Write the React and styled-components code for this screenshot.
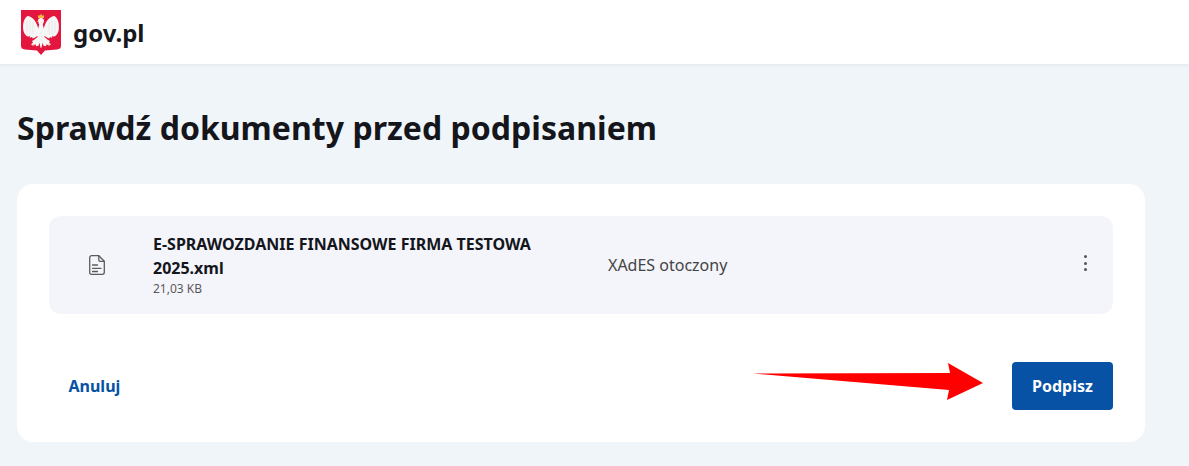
import React from "react";
import styled, { createGlobalStyle } from "styled-components";

const Global = createGlobalStyle`
  html, body { margin: 0; padding: 0; background: #f0f5fa; }
  body { font-family: "Noto Sans", "Open Sans", sans-serif; color: #1b1b1b; }
`;
const Page = styled.div`
  width: 1189px; height: 466px; overflow: hidden; position: relative;
`;
const Header = styled.header`
  height: 64px; background: #fff; display: flex; align-items: center;
  padding-left: 21px; gap: 12px; box-shadow: 0 1px 3px rgba(30,50,80,.08);
`;
const Brand = styled.span`
  font-size: 24px; font-weight: 700; color: #16181d;
  line-height: 32px; position: relative; top: 1px;
`;
const Main = styled.main`
  padding: 40px 44px 0 17px;
`;
const Title = styled.h1`
  margin: 0 0 32px; font-size: 32px; line-height: 48px; font-weight: 700; color: #14161b;
  letter-spacing: .03px;
`;
const Card = styled.section`
  background: #fff; border-radius: 16px; padding: 32px; height: 258px; box-sizing: border-box;
  display: flex; flex-direction: column; gap: 48px;
`;
const Row = styled.div`
  height: 98px; background: #f4f5fb; border-radius: 12px; display: grid;
  grid-template-columns: 96px 463px 1fr 56px; align-items: center;
`;
const IconCell = styled.div`
  display: flex; justify-content: center; color: #5c5c5c;
`;
const FileInfo = styled.div`
  padding: 0 64px 0 8px; margin-bottom: 1px;
`;
const FileName = styled.div`
  font-size: 16px; font-weight: 700; line-height: 24px; color: #14161b;
`;
const FileSize = styled.div`
  font-size: 12px; line-height: 16px; color: #5a5a5a; margin-top: 1px;
`;
const Format = styled.div`
  font-size: 16px; line-height: 24px; color: #444;
`;
const Dots = styled.div`
  display: flex; flex-direction: column; gap: 3.5px; align-items: center; margin-bottom: 4px;
`;
const Dot = styled.i`
  width: 3px; height: 3px; border-radius: 50%; background: #555; display: block;
`;
const Actions = styled.div`
  display: flex; justify-content: space-between; align-items: center;
`;
const Cancel = styled.button`
  border: 0; background: none; padding: 0 19.500px; height: 48px; font: 700 16px/24px "Noto Sans", sans-serif;
  color: #0752a5; cursor: pointer;
`;
const Primary = styled.button`
  border: 0; background: #0752a5; color: #fff; border-radius: 4px; width: 101px; height: 48px;
  font: 700 16px/24px "Noto Sans", sans-serif; cursor: pointer; padding: 0;
`;
const Arrow = styled.svg`
  position: absolute; left: 750px; top: 360px;
`;

const Crest = () => (
  <svg width="40" height="45" viewBox="0 0 40 45">
    <path d="M0 0H40V36Q40 39 36 39.500L24 40.500L20 45L16 40.500L4 39.500Q0 39 0 36Z" fill="#e2163e"/>
    <g fill="#f6f6f6">
      <path d="M20 8c-2.200 0-3.200 1.500-3 3.200.1 1.300 1 2 1.200 3.300L17 19l-1 7 4 4 4-4-1-7-1.200-4.500c.2-1.300 1.100-2 1.200-3.300.2-1.700-.8-3.200-3-3.200z"/>
      <path d="M16.500 16C15 11 11 6.500 6.500 6 3 8 1.500 14 2.200 19.500c.4 3.500 2.300 6.200 5 7.200l1.300-1 .5 2 2-.6.700 1.500c2-.6 3.800-1.800 5.300-3.600.5-3 .6-6 -.5-9z"/>
      <path d="M23.500 16C25 11 29 6.500 33.500 6c3.500 2 5 8 4.300 13.500-.4 3.500-2.300 6.200-5 7.200l-1.300-1-.5 2-2-.6-.7 1.500c-2-.6-3.800-1.800-5.300-3.600-.5-3-.6-6 .5-9z"/>
      <path d="M16.500 27c-1.500 1.500-3.500 3-5.500 4l1 1.800-2 1.500 2 1.500 2.500-1.500.5 2 2.500-.5 1-3 1 5 1 0 1-5 1 3 2.500.5.500-2 2.500 1.500 2-1.500-2-1.500 1-1.800c-2-1-4-2.500-5.500-4z"/>
    </g>
    <g stroke="#d8d8d8" strokeWidth=".5" fill="none">
      <path d="M6 11v12M9 10v14M12 12v12M34 11v12M31 10v14M28 12v12"/>
      <path d="M18 27h4M18.500 30h3"/>
    </g>
    <path d="M17 4.500l1 1.500 2-2 2 2 1-1.500V8h-6z" fill="#f0b840"/>
    <path d="M17.500 10.500l-1.800 1.200 2.200.4z" fill="#f0b840"/>
    <path d="M11.500 34l2 .5-1 1zM28.500 34l-2 .5 1 1z" fill="#f0b840"/>
  </svg>
);

const DocIcon = () => (
  <svg width="16" height="20" viewBox="0 0 16 20" fill="none" stroke="currentColor" strokeWidth="1.300" strokeLinejoin="round" strokeLinecap="round">
    <path d="M2.500.7h7.300l5.500 5.600v11a2 2 0 0 1-2 2H2.500a1.800 1.800 0 0 1-1.800-2V2.700a1.900 1.900 0 0 1 1.800-2z"/>
    <path d="M9.800.7V5a1.300 1.300 0 0 0 1.300 1.300h4.200"/>
    <path d="M3.500 10h5M3.500 13.300h8.500M3.500 16.500h5"/>
  </svg>
);

export default function App() {
  return (
    <Page>
      <Global />
      <Header>
        <Crest />
        <Brand>gov.pl</Brand>
      </Header>
      <Main>
        <Title>Sprawdź dokumenty przed podpisaniem</Title>
        <Card>
          <Row>
            <IconCell><DocIcon /></IconCell>
            <FileInfo>
              <FileName>E-SPRAWOZDANIE FINANSOWE FIRMA TESTOWA 2025.xml</FileName>
              <FileSize>21,03 KB</FileSize>
            </FileInfo>
            <Format>XAdES otoczony</Format>
            <Dots><Dot /><Dot /><Dot /></Dots>
          </Row>
          <Actions>
            <Cancel>Anuluj</Cancel>
            <Primary>Podpisz</Primary>
          </Actions>
        </Card>
      </Main>
      <Arrow width="240" height="44" viewBox="0 0 240 44">
        <path d="M3 13.500L200 13L198 3L233 23L197 40L199 30Z" fill="#ff0000"/>
      </Arrow>
    </Page>
  );
}
